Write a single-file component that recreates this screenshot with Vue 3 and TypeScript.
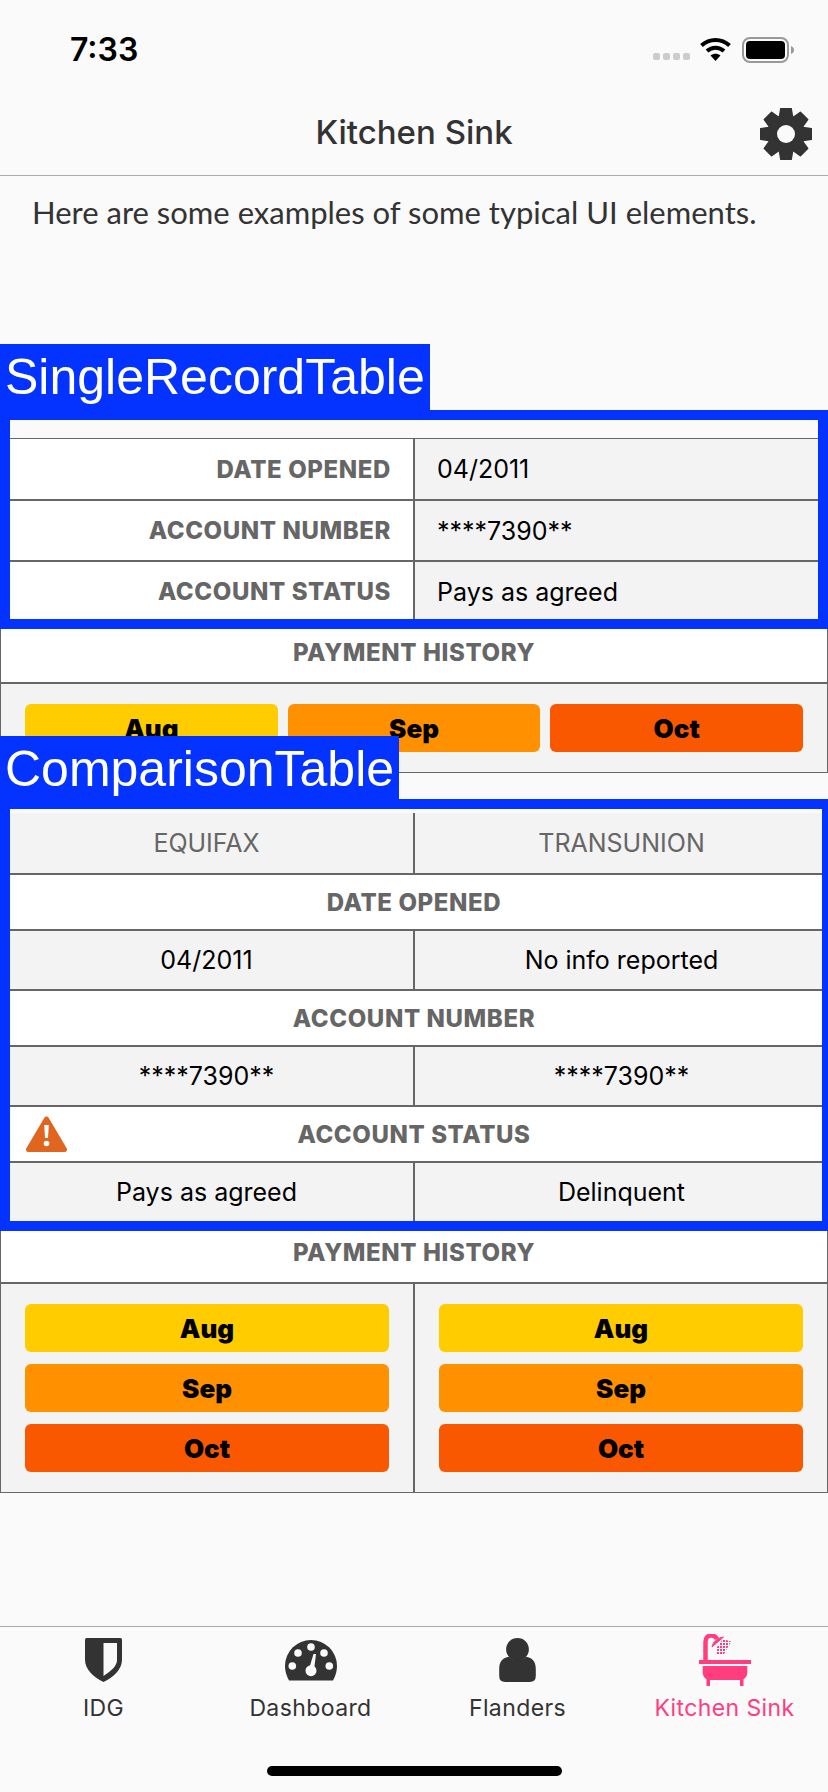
<script setup lang="ts">
const months = [
  { name: 'Aug', color: '#ffcc00' },
  { name: 'Sep', color: '#ff9000' },
  { name: 'Oct', color: '#f95800' },
]

const singleRows = [
  { label: 'DATE OPENED', value: '04/2011' },
  { label: 'ACCOUNT NUMBER', value: '****7390**' },
  { label: 'ACCOUNT STATUS', value: 'Pays as agreed' },
]

const compareRows = [
  { label: 'DATE OPENED', left: '04/2011', right: 'No info reported', warn: false },
  { label: 'ACCOUNT NUMBER', left: '****7390**', right: '****7390**', warn: false },
  { label: 'ACCOUNT STATUS', left: 'Pays as agreed', right: 'Delinquent', warn: true },
]

// 8 tooth cog centred on 26,26
function gearPath(): string {
  const pts: string[] = []
  const teeth = 8
  for (let i = 0; i < teeth; i++) {
    const a = (i * Math.PI * 2) / teeth - Math.PI / 2
    const spots: [number, number][] = [
      [18.5, -0.36],
      [26, -0.2],
      [26, 0.2],
      [18.5, 0.36],
    ]
    for (const [r, d] of spots) {
      const x = 26 + r * Math.cos(a + d)
      const y = 26 + r * Math.sin(a + d)
      pts.push(`${x.toFixed(2)} ${y.toFixed(2)}`)
    }
  }
  return 'M' + pts.join('L') + 'Z'
}
const gear = gearPath()
</script>

<template>
  <div class="screen">
    <div class="status">
      <span class="time">7:33</span>
      <div class="status-icons">
        <div class="dots"><i></i><i></i><i></i><i></i></div>
        <svg class="wifi" width="31" height="24" viewBox="0 0 31 24">
          <path d="M1.5 8.5C9.5 1 21.5 1 29.5 8.5" fill="none" stroke="#000" stroke-width="4" />
          <path d="M7 14C12 9.5 19 9.5 24 14" fill="none" stroke="#000" stroke-width="4" />
          <path d="M10.5 18.5C13.5 16 17.5 16 20.5 18.5L15.5 24Z" fill="#000" />
        </svg>
        <svg class="battery" width="52" height="26" viewBox="0 0 52 26">
          <rect x="1" y="1" width="45" height="24" rx="7" fill="none" stroke="#999" stroke-width="2" />
          <rect x="4" y="4" width="39" height="18" rx="4" fill="#000" />
          <path d="M49 9C51 10 52 11 52 13C52 15 51 16 49 17Z" fill="#999" />
        </svg>
      </div>
    </div>

    <header class="nav">
      <h1>Kitchen Sink</h1>
      <svg class="gear" width="52" height="52" viewBox="0 0 52 52">
        <path :d="gear" fill="#333" stroke="#333" stroke-width="1.5" stroke-linejoin="round" />
        <circle cx="26" cy="26" r="9" fill="#fafafa" />
      </svg>
    </header>

    <p class="intro">Here are some examples of some typical UI elements.</p>

    <section class="table single">
      <div class="outline single-outline">
        <span class="tag single-tag">SingleRecordTable</span>
        <div v-for="row in singleRows" :key="row.label" class="row">
          <div class="cell head right-text">{{ row.label }}</div>
          <div class="cell value left-text">{{ row.value }}</div>
        </div>
      </div>
      <div class="row title-row">
        <div class="cell head">PAYMENT HISTORY</div>
      </div>
      <div class="row chips-row">
        <div class="cell value chips-across">
          <div v-for="m in months" :key="m.name" class="chip" :style="{ background: m.color }">{{ m.name }}</div>
        </div>
      </div>
    </section>

    <section class="table compare">
      <div class="outline compare-outline">
        <span class="tag compare-tag">ComparisonTable</span>
        <div class="row tall">
          <div class="cell value bureau">EQUIFAX</div>
          <div class="cell value bureau">TRANSUNION</div>
        </div>
        <template v-for="row in compareRows" :key="row.label">
          <div class="row short">
            <div class="cell head">
              <svg v-if="row.warn" class="warn" width="41" height="36" viewBox="0 0 41 36">
                <path d="M20.5 3L38.5 33.5H2.5Z" fill="#e0651f" stroke="#e0651f" stroke-width="5" stroke-linejoin="round" />
                <path d="M18.2 9H22.8L22 22H19Z" fill="#fff" />
                <circle cx="20.5" cy="27.5" r="2.8" fill="#fff" />
              </svg>
              {{ row.label }}
            </div>
          </div>
          <div class="row tall">
            <div class="cell value">{{ row.left }}</div>
            <div class="cell value">{{ row.right }}</div>
          </div>
        </template>
      </div>
      <div class="row title-row">
        <div class="cell head">PAYMENT HISTORY</div>
      </div>
      <div class="row chips-row">
        <div v-for="side in 2" :key="side" class="cell value chips-down">
          <div v-for="m in months" :key="m.name" class="chip" :style="{ background: m.color }">{{ m.name }}</div>
        </div>
      </div>
    </section>

    <nav class="tabs">
      <div class="tab">
        <svg width="37" height="44" viewBox="0 0 37 44">
          <path d="M1.5 0H35.5Q37 0 37 1.5V22C37 31 29 39 18.5 44C8 39 0 31 0 22V1.5Q0 0 1.5 0Z" fill="#333" />
          <path d="M18.5 5H32V22C32 28 26 33 18.5 38Z" fill="#fafafa" />
        </svg>
        <span>IDG</span>
      </div>
      <div class="tab">
        <svg width="52" height="44" viewBox="0 0 52 44">
          <path d="M4 42.5C1.5 38 0 33 0 28A26 26 0 0 1 52 28C52 33 50.500 38 48 42.500Z" fill="#333" />
          <g fill="#fafafa">
            <circle cx="26" cy="9" r="3.800" />
            <circle cx="13" cy="15" r="3.800" />
            <circle cx="39" cy="15" r="3.800" />
            <circle cx="7.300" cy="28" r="3.800" />
            <circle cx="44.300" cy="28" r="3.800" />
            <circle cx="26" cy="32.700" r="5.500" />
            <path d="M24 31L28.500 16H31L29 32Z" />
          </g>
        </svg>
        <span>Dashboard</span>
      </div>
      <div class="tab">
        <svg width="37" height="44" viewBox="0 0 37 44.500">
          <path d="M6 44.500H31Q37 44.500 37 38.500V31C37 24 33.500 20 27 19C24 23.500 13 23.500 10 19C3.500 20 0 24 0 31V38.500Q0 44.500 6 44.500Z" fill="#333" />
          <circle cx="18.500" cy="11.500" r="11.500" fill="#333" />
        </svg>
        <span>Flanders</span>
      </div>
      <div class="tab active">
        <svg class="bath" width="52" height="52" viewBox="0 0 52 52">
          <defs>
            <pattern id="spray" width="3" height="3" patternUnits="userSpaceOnUse">
              <rect width="2" height="2" fill="#ff3d7f" />
            </pattern>
          </defs>
          <path d="M6.500 27V8C6.500 3.500 9 1.500 12 1.500C15 1.500 17 3 18 5" fill="none" stroke="#ff3d7f" stroke-width="4.500" />
          <path d="M13 13C14 8 18 4 24.500 3Z" fill="#ff3d7f" stroke="#ff3d7f" stroke-linejoin="round" />
          <path d="M18 20L18 13L24 5L32 7.500L25 20Z" fill="url(#spray)" />
          <rect y="26" width="52" height="4" fill="#ff3d7f" />
          <path d="M3.700 32H48.300V38C48.300 42 46 46 41 46H11C6 46 3.700 42 3.700 38Z" fill="#ff3d7f" />
          <rect x="7.500" y="44" width="3.500" height="8" fill="#ff3d7f" />
          <rect x="41" y="44" width="3.500" height="8" fill="#ff3d7f" />
        </svg>
        <span>Kitchen Sink</span>
      </div>
    </nav>
    <div class="home"></div>
  </div>
</template>

<style>
body {
  margin: 0;
  background: #fafafa;
}
</style>

<style scoped>
.screen {
  position: relative;
  display: flex;
  flex-direction: column;
  width: 828px;
  height: 1792px;
  overflow: hidden;
  background: #fafafa;
  color: #333;
  font-family: Inter, "Liberation Sans", sans-serif;
}

.status {
  display: flex;
  justify-content: space-between;
  align-items: flex-start;
  height: 88px;
  box-sizing: border-box;
  padding: 30px 34px 0 70px;
}

.time {
  font-size: 32px;
  line-height: 40px;
  font-weight: 600;
  color: #000;
}

.status-icons {
  display: flex;
  align-items: flex-start;
  padding-top: 7px;
}

.dots {
  display: flex;
  gap: 3px;
  margin: 16px 10px 0 0;
}

.dots i {
  width: 7px;
  height: 7px;
  border-radius: 2px;
  background: #ccc;
}

.battery {
  margin-left: 11px;
}

.nav {
  position: relative;
  display: flex;
  justify-content: center;
  align-items: center;
  height: 88px;
  box-sizing: border-box;
  border-bottom: 1px solid #aaa;
  padding-bottom: 0;
}

.nav h1 {
  margin: 0;
  font-size: 33px;
  font-weight: 500;
  color: #333;
}

.gear {
  position: absolute;
  left: 760px;
  top: 20px;
}

.intro {
  margin: 0;
  padding: 16px 32px 0;
  height: 262px;
  box-sizing: border-box;
  font-family: Lato, sans-serif;
  font-size: 31px;
  line-height: 40px;
  color: #333;
}

.table {
  display: flex;
  flex-direction: column;
}

.compare {
  margin-top: 40px;
}

.outline {
  position: relative;
}

.outline::after {
  content: "";
  position: absolute;
  left: 0;
  right: 0;
  box-sizing: border-box;
  border: 10px solid #0433ff;
  pointer-events: none;
  z-index: 2;
}

.single-outline::after {
  top: -28px;
  bottom: -8px;
}

.compare-outline::after {
  top: -14px;
  bottom: -10px;
  border-right-width: 6px;
}

.tag {
  position: absolute;
  left: 0;
  z-index: 3;
  box-sizing: border-box;
  padding: 0 5px;
  background: #0433ff;
  color: #fff;
  font-family: "Liberation Sans", sans-serif;
  font-size: 50px;
  line-height: 66px;
  white-space: nowrap;
}

.single-tag {
  top: -94px;
  height: 66px;
}

.compare-tag {
  top: -77px;
  height: 66px;
}

.row {
  display: flex;
  border-top: 2px solid #666;
  height: 61px;
  box-sizing: border-box;
}

.row.short {
  height: 56px;
}

.row.tall {
  height: 60px;
}

.outline > .row:first-of-type {
  border-top-width: 0;
}

.single-outline > .row:first-of-type {
  border-top-width: 1px;
}

.title-row {
  border-left: 1px solid #666;
  border-right: 1px solid #666;
}

.chips-row {
  height: auto;
  border-bottom: 1px solid #666;
  border-left: 1px solid #666;
  border-right: 1px solid #666;
}

.cell {
  position: relative;
  flex: 1 1 0;
  display: flex;
  align-items: center;
  justify-content: center;
  min-width: 0;
  font-size: 25px;
}

.cell + .cell {
  border-left: 2px solid #666;
}

.head {
  background: #fff;
  color: #666;
  font-weight: 800;
  font-size: 24px;
  letter-spacing: 0.6px;
}

.value {
  background: #f3f3f3;
  color: #000;
}

.right-text {
  justify-content: flex-end;
  padding-right: 22px;
}

.left-text {
  justify-content: flex-start;
  padding-left: 22px;
}

.bureau {
  color: #666;
}

.chips-across {
  gap: 10px;
  padding: 20px 24px;
  box-sizing: border-box;
}

.chips-across .chip {
  flex: 1 1 0;
}

.chips-down {
  flex-direction: column;
  align-items: stretch;
  gap: 12px;
  padding: 20px 24px;
  box-sizing: border-box;
}

.chip {
  height: 48px;
  border-radius: 6px;
  display: flex;
  align-items: center;
  justify-content: center;
  color: #000;
  font-weight: 900;
  font-size: 26px;
}

.warn {
  position: absolute;
  left: 26px;
  top: 9px;
}

.tabs {
  position: absolute;
  left: 0;
  right: 0;
  top: 1626px;
  display: flex;
  border-top: 1px solid #aaa;
  box-sizing: border-box;
  height: 110px;
}

.tab {
  flex: 1 1 0;
  display: flex;
  flex-direction: column;
  align-items: center;
  padding-top: 11px;
  color: #333;
  font-size: 23px;
}

.tab svg {
  height: 44px;
}

.tab .bath {
  height: 52px;
  margin-top: -4px;
  margin-bottom: -4px;
}

.tab span {
  margin-top: 12px;
  line-height: 28px;
  letter-spacing: 0.4px;
}

.tab.active {
  color: #ff3d7f;
}

.home {
  position: absolute;
  left: 267px;
  top: 1766px;
  width: 295px;
  height: 10px;
  border-radius: 5px;
  background: #000;
}
</style>
